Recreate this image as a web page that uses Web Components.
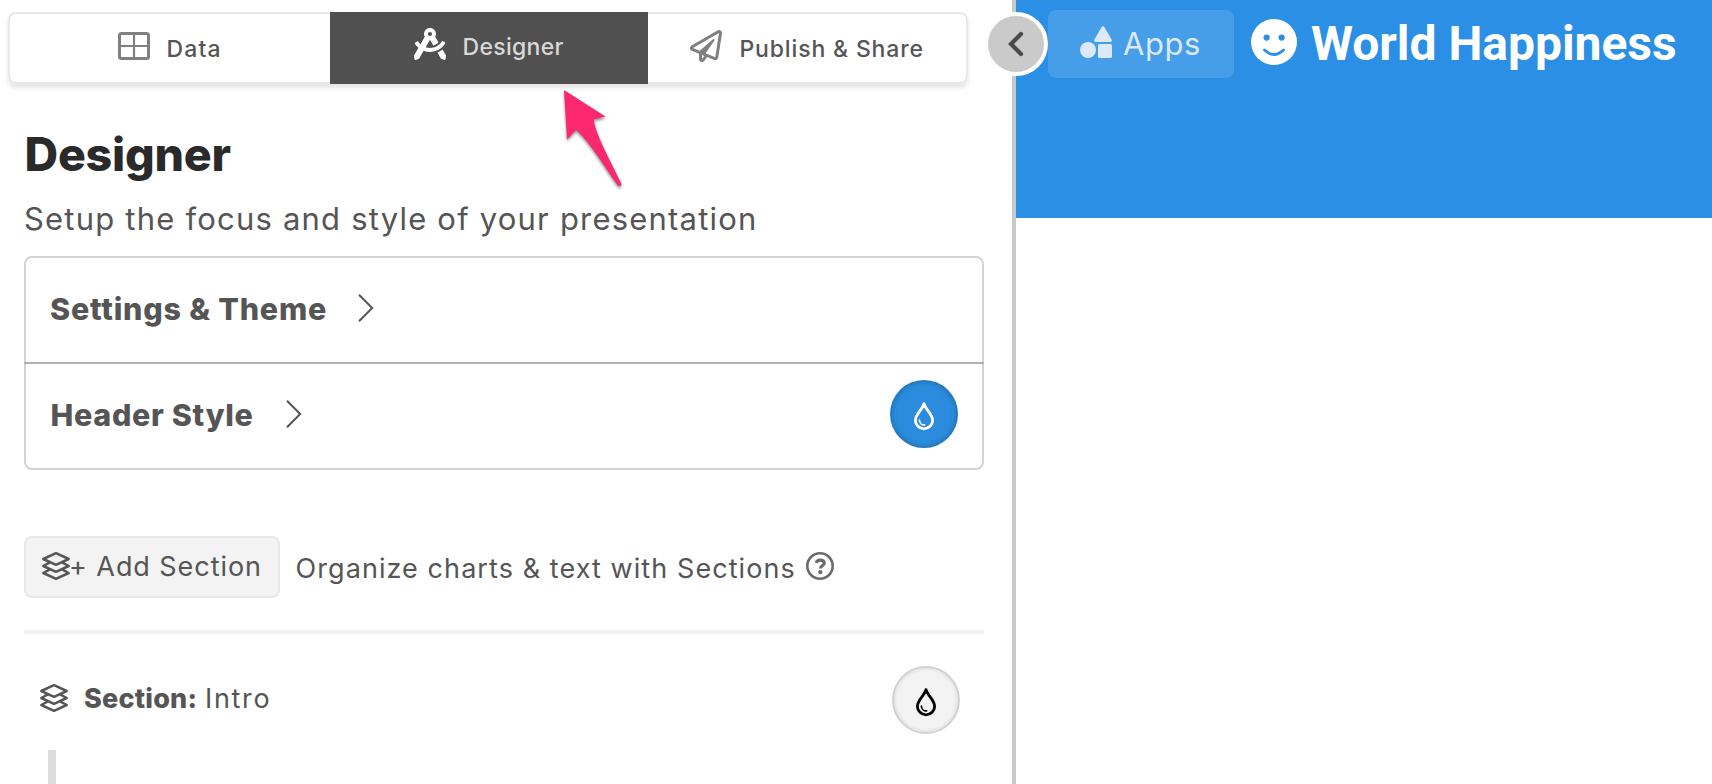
<!DOCTYPE html>
<html lang="en">
<head>
<meta charset="utf-8">
<title>World Happiness - Designer</title>
<style>
  html, body { margin: 0; height: 100%; overflow: hidden; background: #fff; }
  body { font-family: Inter, "Liberation Sans", sans-serif; color: #555; }
</style>
</head>
<body>
<designer-app></designer-app>

<script>
const ICONS = {
  grid: ['0 0 32 28', '<g fill="none" stroke="#808080"><rect x="1.5" y="1.5" width="29" height="25" rx="2" stroke-width="3"/><path d="M16 2v24M2 14h28" stroke-width="2.2"/></g>'],
  compass: ['0 0 512 512', '<path fill="#fff" d="M457.01 344.42c-25.05 20.33-52.63 37.18-82.54 49.05l54.38 94.19 53.95 23.04c9.81 4.19 20.89-2.21 22.17-12.8l7.02-58.25-54.98-95.23zm42.49-94.56c4.86-7.67 1.89-17.99-6.05-22.39l-28.07-15.57c-7.48-4.15-16.61-1.46-21.26 5.72C403.01 281.15 332.25 320 256 320c-23.93 0-47.23-4.25-69.41-11.53l67.36-116.68c.7.02 1.34.21 2.04.21s1.35-.19 2.04-.21l51.09 88.5c31.23-8.96 59.56-25.75 82.61-48.92l-51.79-89.71C347.39 128.03 352 112.63 352 96c0-53.02-42.98-96-96-96s-96 42.98-96 96c0 16.63 4.61 32.03 12.05 45.66l-68.3 118.31c-12.55-11.61-23.96-24.59-33.68-39-4.79-7.1-13.97-9.62-21.38-5.33l-27.75 16.07c-7.85 4.54-10.63 14.9-5.64 22.47 15.57 23.64 34.69 44.21 55.98 62.02L0 439.66l7.02 58.25c1.28 10.59 12.36 16.99 22.17 12.8l53.95-23.04 70.8-122.63C186.13 377.28 220.62 384 256 384c99.05 0 190.88-51.01 243.5-134.14zM256 64c17.67 0 32 14.33 32 32s-14.33 32-32 32-32-14.33-32-32 14.33-32 32-32z"/>'],
  plane: ['0 0 512 512', '<path fill="#808080" d="M440 6.5L24 246.4c-34.4 19.9-31.1 70.8 5.7 85.9L144 379.6V464c0 46.4 59.2 65.5 86.6 28.6l43.8-59.1 111.9 46.2c5.9 2.4 12.1 3.6 18.3 3.6 8.2 0 16.3-2.1 23.6-6.2 12.8-7.2 21.6-20 23.9-34.5l59.4-387.2c6.1-40.1-36.9-68.8-71.5-48.9zM192 464v-64.6l36.6 15.1L192 464zm212.6-28.7l-153.8-63.5L391 169.5c10.7-15.5-9.5-33.5-23.7-21.2L155.8 332.6 48 288 464 48l-59.4 387.3z"/>'],
  chevron: ['0 0 16 28', '<path d="M1 .8L14.2 14 1 27.2" fill="none" stroke="#555" stroke-width="2"/>'],
  back: ['0 0 16 26', '<path d="M13 3L3 13l10 10" fill="none" stroke="#4a4a4a" stroke-width="4.2" stroke-linecap="round" stroke-linejoin="miter"/>'],
  drop: ['0 0 20 28', '<g fill="none" stroke="currentColor" stroke-linecap="round"><path d="M10 1.6C8.600 7.500 1.400 12 1.400 18.400a8.600 8.400 0 0 0 17.200 0C18.600 12 11.400 7.500 10 1.600z" stroke-width="2.800" stroke-linejoin="round"/><path d="M5.400 18.200a5 5 0 0 0 5.200 4.700" stroke-width="1.700"/></g>'],
  layers: ['0 0 28 28', '<g fill="none" stroke="#555" stroke-width="2.500" stroke-linejoin="round" stroke-linecap="round"><path d="M14 1.200L26.700 7 14 12.800 1.300 7z"/><path d="M7 10.800L1.300 14 14 19.800 26.700 14 21 10.800"/><path d="M7 17.800L1.300 21 14 26.800 26.700 21 21 17.800"/></g>'],
  help: ['0 0 28 28', '<g fill="none" stroke="#6b6b6b"><circle cx="14" cy="14" r="12.700" stroke-width="2.600"/><path d="M10 10.800c.8-1.800 2.200-2.700 4.200-2.700 2.300 0 4 1.200 4 3.100 0 2.600-3.600 2.500-3.800 5.300" stroke-width="3.100"/></g><circle cx="14.300" cy="20.200" r="2.100" fill="#6b6b6b"/>'],
  shapes: ['0 0 32 32', '<g fill="#dbe9fa"><path d="M21.700.9a1.500 1.500 0 0 1 2.600 0l7.400 12.600c.6 1.200 0 2.500-1.400 2.500H15.800c-1.400 0-2-1.300-1.400-2.500z"/><circle cx="8" cy="24" r="8"/><rect x="18" y="18" width="14" height="14" rx="1.500"/></g>'],
  smile: ['0 0 46 46', '<circle cx="23" cy="23" r="23" fill="#fff"/><g fill="#2b8fe5"><circle cx="15.600" cy="18.600" r="3.100"/><circle cx="30.600" cy="18.600" r="3.100"/></g><path d="M13.500 31Q23 40.200 32.500 31" fill="none" stroke="#2b8fe5" stroke-width="2.800" stroke-linecap="round"/>'],
  arrow: ['0 0 60 100', '<path d="M2 2L43.500 28.500 31.500 31.500C34 47 46 68 59 95c1 3-1.500 4.500-3.500 2C42 78 27 53 14 42L5 51.500z" fill="#fb276f"/>']
};

const define = (name, markup, ready) => {
  const template = document.createElement('template');
  template.innerHTML = markup;
  customElements.define(name, class extends HTMLElement {
    connectedCallback() {
      if (this.shadowRoot) return;
      this.attachShadow({ mode: 'open' }).append(template.content.cloneNode(true));
      if (ready) ready(this, this.shadowRoot);
    }
  });
};

/* Icon from the table above; w and h give its box. */
define('ui-icon', '<style>:host{display:block;flex:none}svg{display:block;overflow:visible}</style><svg></svg>', (host, root) => {
  const [box, body] = ICONS[host.getAttribute('name')];
  const svg = root.querySelector('svg');
  svg.setAttribute('viewBox', box);
  svg.setAttribute('width', host.getAttribute('w'));
  svg.setAttribute('height', host.getAttribute('h'));
  svg.innerHTML = body;
});

/* One line of text, tracked so that its ink spans exactly `span` pixels. */
define('text-run', `<style>
  :host{display:block;flex:none;line-height:40px;white-space:pre}
  span{display:block;white-space:pre;font-kerning:normal}
</style><span><slot></slot></span>`, (host, root) => {
  const span = root.querySelector('span');
  const width = +host.getAttribute('span');
  const text = host.textContent;
  const style = getComputedStyle(host);
  const ctx = document.createElement('canvas').getContext('2d');
  ctx.font = `${style.fontWeight} ${style.fontSize} ${style.fontFamily}`;
  const m = ctx.measureText(text);
  const ink = m.actualBoundingBoxLeft + m.actualBoundingBoxRight;
  host.style.width = width + 'px';
  span.style.letterSpacing = ((width - ink) / (text.length - 1)).toFixed(3) + 'px';
  span.style.marginLeft = m.actualBoundingBoxLeft.toFixed(2) + 'px';
});

define('tab-item', `<style>
  :host{display:flex;box-sizing:border-box;height:72px;align-items:flex-start;font-size:23px;font-weight:500;color:#555;
    border:solid #e8e8e8;border-width:2px 0;background:#fff}
  :host([first]){border-left-width:2px;border-radius:8px 0 0 8px}
  :host([last]){border-right-width:2px;border-radius:0 8px 8px 0}
  :host([active]){background:#505050;border-color:#505050;color:#d8d8d8}
</style><slot name="icon"></slot><slot></slot>`);

define('tab-bar', `<style>
  :host{display:grid;grid-template-columns:322px 318px 320px;width:960px;margin:12px 0 0 8px;border-radius:8px;box-shadow:0 4px 5px rgba(0,0,0,.11)}
  text-run{margin-top:15px}
</style>
<tab-item first>
  <ui-icon slot="icon" name="grid" w="32" h="28" style="margin:18px 17.500px 0 108px"></ui-icon>
  <text-run span="52">Data</text-run>
</tab-item>
<tab-item active>
  <ui-icon slot="icon" name="compass" w="32" h="32" style="margin:14px 17.500px 0 84px"></ui-icon>
  <text-run span="100" style="margin-top:13px;font-weight:450">Designer</text-run>
</tab-item>
<tab-item last>
  <ui-icon slot="icon" name="plane" w="32" h="32" style="margin:16px 18.500px 0 42px"></ui-icon>
  <text-run span="182">Publish &amp; Share</text-run>
</tab-item>`);

define('drop-button', `<style>
  :host{display:flex;flex:none;box-sizing:border-box;width:68px;height:68px;border-radius:50%;align-items:center;justify-content:center;
    background:#f3f3f3;border:2px solid #d2d2d2;color:#000;box-shadow:inset 0 0 4px rgba(0,0,0,.13)}
  :host([blue]){background:#2b8cdd;border:0;color:#fff;box-shadow:inset 0 0 7px rgba(0,0,0,.3)}
  ui-icon{margin-top:4px}
</style><ui-icon name="drop" w="20" h="28"></ui-icon>`);

define('setting-row', `<style>
  :host{display:flex;align-items:flex-start;box-sizing:border-box;font-size:30.500px;font-weight:800}
</style><slot></slot>`);

define('settings-card', `<style>
  :host{display:grid;grid-template-rows:104px 2px 104px;box-sizing:border-box;width:960px;height:214px;border:2px solid #d3d3d3;border-radius:8px}
  hr{margin:0 -2px;border:0;background:#b0b0b0}
  drop-button{margin:16px 24px 0 auto}
</style>
<setting-row>
  <text-run span="275" style="margin:31px 32px 0 25px">Settings &amp; Theme</text-run>
  <ui-icon name="chevron" w="16" h="28" style="margin-top:36px"></ui-icon>
</setting-row>
<hr>
<setting-row>
  <text-run span="201" style="margin:31px 33px 0 25.500px">Header Style</text-run>
  <ui-icon name="chevron" w="16" h="28" style="margin-top:36px"></ui-icon>
  <drop-button blue></drop-button>
</setting-row>`);

define('add-button', `<style>
  :host{display:flex;flex:none;align-items:flex-start;box-sizing:border-box;width:256px;height:62px;padding:8px 0 0 16px;
    border:2px solid #e8e8e8;border-radius:8px;background:#f3f3f3}
  ui-icon{margin:6px 1px 0 0}
</style><ui-icon name="layers" w="28" h="28"></ui-icon><slot></slot>`);

define('designer-panel', `<style>
  :host{display:flex;flex-direction:column;box-sizing:border-box;width:1016px;height:784px;border-right:4px solid #c9c9c9;background:#fff}
  main{display:flex;flex-direction:column;padding-left:24px}
  .title{margin:42px 0 0 2.500px;font-size:46.500px;font-weight:800;line-height:56px;color:#2a2a2a}
  .sub{margin:17px 0 17px 1px;font-size:31px}
  .add,.section{display:flex;align-items:flex-start;font-size:27px}
  .add{margin-top:66px}
  .rule{width:960px;height:4px;margin-top:32px;background:#f0f0f0}
  .section{width:936px;height:116px}
  .section drop-button{margin:32px 0 0 auto}
  .stem{width:8px;height:34px;margin-left:24px;background:#ddd}
</style>
<tab-bar></tab-bar>
<main>
  <text-run class="title" span="204">Designer</text-run>
  <text-run class="sub" span="729">Setup the focus and style of your presentation</text-run>
  <settings-card></settings-card>
  <div class="add">
    <add-button><text-run span="188" style="margin-top:1px">+ Add Section</text-run></add-button>
    <text-run span="497" style="margin:13px 13px 0 16.500px">Organize charts &amp; text with Sections</text-run>
    <ui-icon name="help" w="28" h="28" style="margin:16px 0 0 -.5px"></ui-icon>
  </div>
  <div class="rule"></div>
  <div class="section">
    <ui-icon name="layers" w="28" h="28" style="margin:50px 16px 0 16px"></ui-icon>
    <text-run span="111.500" style="margin:45px 11.500px 0 0;font-weight:800">Section:</text-run>
    <text-run span="61.500" style="margin-top:45px">Intro</text-run>
    <drop-button></drop-button>
  </div>
  <div class="stem"></div>
</main>`);

define('apps-button', `<style>
  :host{display:flex;flex:none;align-items:flex-start;box-sizing:border-box;width:186px;height:68px;padding:16px 0 0 32px;border-radius:8px;
    background:rgba(255,255,255,.13);color:#dbe9fa;font-size:31px;font-weight:400}
  text-run{margin:-2px 0 0 11px}
</style><ui-icon name="shapes" w="32" h="32"></ui-icon><text-run span="76">Apps</text-run>`);

define('page-header', `<style>
  :host{display:flex;align-items:flex-start;box-sizing:border-box;height:218px;padding:10px 0 0 32px;background:#2b8fe5;color:#fff}
  ui-icon{margin:9px 14px 0 17px}
  text-run{margin-top:6px;line-height:56px;font-family:Roboto,"Liberation Sans",sans-serif;font-size:48px;font-weight:700}
</style>
<apps-button></apps-button>
<ui-icon name="smile" w="46" h="46"></ui-icon>
<text-run span="364">World Happiness</text-run>`);

define('collapse-button', `<style>
  :host{display:flex;position:absolute;left:984px;top:12px;box-sizing:border-box;width:64px;height:64px;border:4px solid #fff;border-radius:50%;
    background:#cacaca;align-items:center;justify-content:center}
</style><ui-icon name="back" w="16" h="26"></ui-icon>`);

define('pointer-arrow', `<style>
  :host{display:block;position:absolute;left:562px;top:88px;filter:drop-shadow(0 2px 1.500px rgba(0,0,0,.45))}
</style><ui-icon name="arrow" w="60" h="100"></ui-icon>`);

define('designer-app', `<style>
  :host{display:grid;grid-template-columns:1016px 1fr;position:relative;width:1712px;height:784px;overflow:hidden}
</style>
<designer-panel></designer-panel>
<page-header></page-header>
<collapse-button></collapse-button>
<pointer-arrow></pointer-arrow>`);
</script>
</body>
</html>
